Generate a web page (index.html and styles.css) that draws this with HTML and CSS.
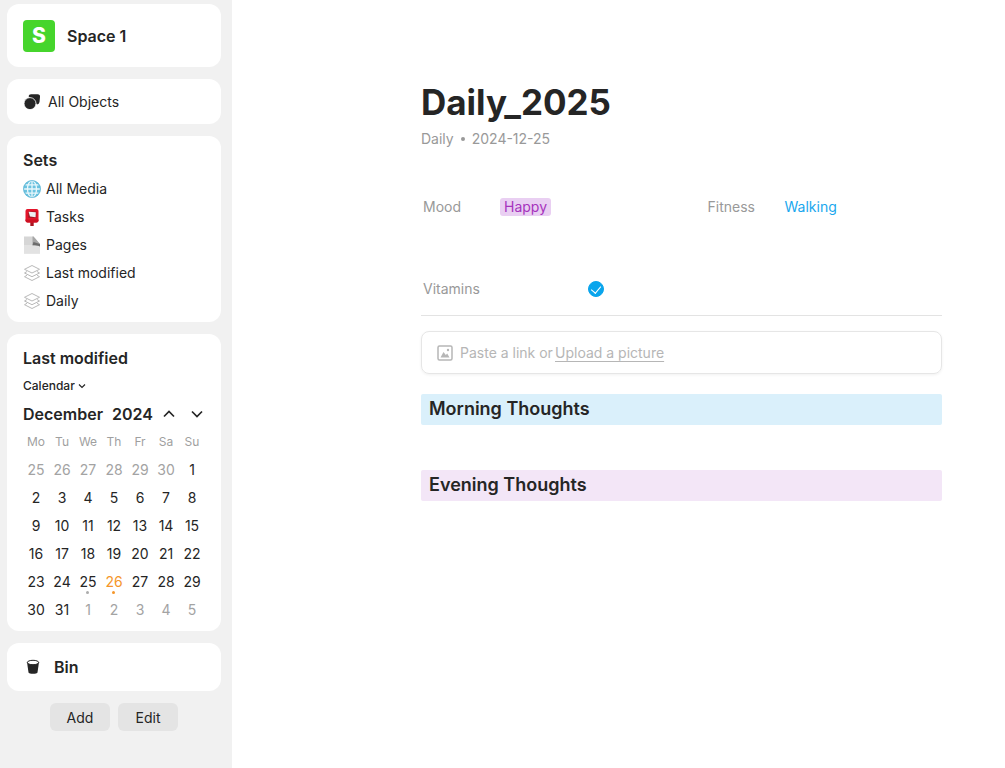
FILE: index.html
```html
<!DOCTYPE html>
<html lang="en">
<head>
    <meta charset="UTF-8">
    <meta name="viewport" content="width=device-width, initial-scale=1.0">
    <title>Daily_2025</title>
    <link rel="stylesheet" href="styles.css">
</head>
<body>

    <aside class="sidebar">
        <a href="#" class="card space">
            <span class="space-icon">S</span>
            <span class="space-name">Space 1</span>
        </a>

        <a href="#" class="card all-objects">
            <svg class="icon" viewBox="0 0 18 18" width="18" height="18">
                <path d="M8 1.200H14.500a2.500 2.500 0 0 1 2.500 2.800l-.5 5a3 3 0 0 1-2.500 2.500L10 7 5.500 3.200A2.600 2.600 0 0 1 8 1.200z" fill="#252525"/>
                <circle cx="7" cy="10.600" r="6" fill="#252525" stroke="#fff" stroke-width=".8"/>
            </svg>
            All Objects
        </a>

        <nav class="card sets">
            <h2>Sets</h2>
            <ul>
                <li><a href="#">
                    <svg class="icon" viewBox="0 0 18 18" width="18" height="18">
                        <circle cx="9" cy="9" r="8.700" fill="#6cc3e0"/>
                        <g fill="none" stroke="#eaf8fc" stroke-width="1.300">
                            <ellipse cx="9" cy="9" rx="4.500" ry="8.200"/>
                            <path d="M9 .8v16.400M.8 9h16.400M2.500 4.800h13M2.500 13.200h13"/>
                        </g>
                        <circle cx="9" cy="9" r="8.400" fill="none" stroke="#5fb6d6" stroke-width=".8"/>
                    </svg>
                    All Media</a></li>
                <li><a href="#">
                    <svg class="icon" viewBox="0 0 18 18" width="18" height="18">
                        <rect x="7.300" y="13" width="3.400" height="5" fill="#a81420"/>
                        <rect x="2.500" y="1" width="13" height="13.500" rx="2" fill="#e3142a"/>
                        <path d="M2.500 11.500h13v1a2 2 0 0 1-2 2h-9a2 2 0 0 1-2-2z" fill="#cc1022"/>
                        <path d="M5.300 3.500h8v6.300h-8z" fill="#9c1a26"/>
                        <path d="M5.600 3.800l7.200.4-.2 5L7 8.500z" fill="#eef1f2"/>
                    </svg>
                    Tasks</a></li>
                <li><a href="#">
                    <svg class="icon" viewBox="0 0 18 18" width="18" height="18">
                        <path d="M1 .5h9.500L17 8v9.500H1z" fill="#d6d6d6"/>
                        <path d="M1 9h16v8.500H1z" fill="#e2e2e2"/>
                        <path d="M9.500 .5h1L17 8v2.500C14.500 9 12 9.200 9.500 9.200z" fill="#a6a6a6"/>
                        <path d="M10.500 6L17 8v2.500C15 9.200 12.500 9.200 9.500 9.200z" fill="#6c6c6c"/>
                    </svg>
                    Pages</a></li>
                <li><a href="#">
                    <svg class="icon layers" viewBox="0 0 18 18" width="18" height="18">
                        <path d="M9 1.500l7.500 3.800L9 9 1.500 5.300z"/>
                        <path d="M4 7.500L1.500 9 9 12.700 16.500 9 14 7.500"/>
                        <path d="M4 11.300l-2.500 1.400L9 16.500l7.500-3.800-2.500-1.400"/>
                    </svg>
                    Last modified</a></li>
                <li><a href="#">
                    <svg class="icon layers" viewBox="0 0 18 18" width="18" height="18">
                        <path d="M9 1.500l7.500 3.800L9 9 1.500 5.300z"/>
                        <path d="M4 7.500L1.500 9 9 12.700 16.500 9 14 7.500"/>
                        <path d="M4 11.300l-2.500 1.400L9 16.500l7.500-3.800-2.500-1.400"/>
                    </svg>
                    Daily</a></li>
            </ul>
        </nav>

        <section class="card calendar">
            <h2>Last modified</h2>
            <div class="view-select">
                <select aria-label="View">
                    <option>Calendar</option>
                </select>
                <svg viewBox="0 0 8 8" width="8" height="8">
                    <path d="M1 2.500l3 3 3-3" fill="none" stroke="#252525" stroke-width="1.200"/>
                </svg>
            </div>
            <div class="month">
                <span class="month-name">December</span>
                <span>2024</span>
                <button type="button" class="prev" aria-label="Previous month">
                    <svg viewBox="0 0 12 12" width="12" height="12"><path d="M1 8.500l5-5 5 5"/></svg>
                </button>
                <button type="button" aria-label="Next month">
                    <svg viewBox="0 0 12 12" width="12" height="12"><path d="M1 3.500l5 5 5-5"/></svg>
                </button>
            </div>
            <table>
                <thead>
                    <tr><th>Mo</th><th>Tu</th><th>We</th><th>Th</th><th>Fr</th><th>Sa</th><th>Su</th></tr>
                </thead>
                <tbody>
                    <tr><td class="other">25</td><td class="other">26</td><td class="other">27</td><td class="other">28</td><td class="other">29</td><td class="other">30</td><td>1</td></tr>
                    <tr><td>2</td><td>3</td><td>4</td><td>5</td><td>6</td><td>7</td><td>8</td></tr>
                    <tr><td>9</td><td>10</td><td>11</td><td>12</td><td>13</td><td>14</td><td>15</td></tr>
                    <tr><td>16</td><td>17</td><td>18</td><td>19</td><td>20</td><td>21</td><td>22</td></tr>
                    <tr><td>23</td><td>24</td><td class="marked">25</td><td class="marked today">26</td><td>27</td><td>28</td><td>29</td></tr>
                    <tr><td>30</td><td>31</td><td class="other">1</td><td class="other">2</td><td class="other">3</td><td class="other">4</td><td class="other">5</td></tr>
                </tbody>
            </table>
        </section>

        <a href="#" class="card bin">
            <svg class="icon" viewBox="0 0 20 20" width="20" height="20">
                <path d="M4 5l1.500 10.500c.3 1.700 8.700 1.700 9 0L16 5z" fill="#252525"/>
                <ellipse cx="10" cy="5.500" rx="5.700" ry="2.200" fill="#fff" stroke="#252525" stroke-width="1"/>
            </svg>
            Bin
        </a>

        <div class="actions">
            <button type="button">Add</button>
            <button type="button">Edit</button>
        </div>
    </aside>

    <main class="page">
        <h1>Daily_2025</h1>
        <div class="meta">
            <span>Daily</span>
            <span class="dot"></span>
            <span>2024-12-25</span>
        </div>

        <div class="relations">
            <div class="relation">
                <span class="label">Mood</span>
                <span class="tag">Happy</span>
            </div>
            <div class="relation">
                <span class="label">Fitness</span>
                <a href="#" class="value">Walking</a>
            </div>
        </div>

        <div class="vitamins">
            <label for="vitamins">Vitamins</label>
            <input type="checkbox" id="vitamins" checked>
        </div>

        <div class="upload">
            <svg viewBox="0 0 16 16" width="16" height="16">
                <rect x="1" y="1" width="14" height="14" rx="1.500" fill="none" stroke="#b6b6b6" stroke-width="1.500"/>
                <path d="M3.500 12.500L6.500 7l2.300 3 1.400-1.500 2.300 4z" fill="#b6b6b6"/>
                <circle cx="11" cy="5" r="1.200" fill="#b6b6b6"/>
            </svg>
            <input type="text" aria-label="Picture link" placeholder="Paste a link or">
            <a href="#">Upload a picture</a>
        </div>

        <h3 class="morning">Morning Thoughts</h3>
        <h3 class="evening">Evening Thoughts</h3>
    </main>

</body>
</html>
```
FILE: styles.css
```css
* {
    box-sizing: border-box;
}
body {
    display: flex;
    min-height: 100vh;
    margin: 0;
    font-family: Inter, sans-serif;
    font-size: 14px;
    line-height: 20px;
    color: #252525;
    background-color: #fff;
}
a {
    color: inherit;
    text-decoration: none;
}
button, input, select {
    font-family: inherit;
    font-size: inherit;
    color: inherit;
}
button {
    border: none;
    cursor: pointer;
}
h1, h2, h3, ul {
    margin: 0;
    padding: 0;
}

/* Sidebar */
.sidebar {
    flex: none;
    width: 232px;
    padding: 4px 11px 12px 7px;
    display: flex;
    flex-direction: column;
    gap: 12px;
    background-color: #f1f1f1;
}
.card {
    padding: 12px 16px;
    border-radius: 12px;
    background-color: #fff;
}
.card h2 {
    font-size: 16px;
    line-height: 24px;
    font-weight: 600;
}
.icon {
    flex: none;
}
.space {
    display: flex;
    align-items: center;
    gap: 12px;
    padding: 16px 16px 15px;
}
.space-icon {
    width: 32px;
    height: 32px;
    border-radius: 4px;
    background-color: #46d52c;
    color: #fff;
    font-size: 21px;
    line-height: 32px;
    font-weight: 800;
    text-align: center;
}
.space-name {
    font-size: 16px;
    font-weight: 600;
}
.all-objects {
    display: flex;
    align-items: center;
    gap: 7px;
    padding: 13px 16px 12px;
}
.sets {
    padding-bottom: 7px;
}
.sets ul {
    margin-top: 3px;
    list-style: none;
}
.sets a {
    display: flex;
    align-items: center;
    gap: 5px;
    height: 28px;
}
.layers {
    fill: none;
    stroke: #b9b9b9;
    stroke-width: 1;
    stroke-linejoin: round;
}

/* Calendar widget */
.calendar {
    padding-bottom: 7px;
}
.view-select {
    display: flex;
    align-items: center;
    gap: 3px;
    margin-top: 6px;
}
.view-select select {
    appearance: none;
    padding: 0;
    border: none;
    background: none;
    font-size: 12px;
    line-height: 20px;
    font-weight: 500;
}
.month {
    display: flex;
    align-items: center;
    margin-top: 6px;
    font-size: 16px;
    line-height: 24px;
    font-weight: 600;
}
.month-name {
    margin-right: 9px;
}
.month button {
    display: flex;
    padding: 3px 2px;
    background: none;
}
.month .prev {
    margin: 0 12px 0 auto;
}
.month path {
    fill: none;
    stroke: #252525;
    stroke-width: 1.7;
}
.calendar table {
    width: 100%;
    margin-top: 2px;
    border-collapse: collapse;
    table-layout: fixed;
}
.calendar th, .calendar td {
    height: 28px;
    padding: 0;
    text-align: center;
}
.calendar th {
    font-size: 12px;
    font-weight: 400;
    color: #9f9f9f;
}
.calendar .other {
    color: #a3a3a3;
}
.marked {
    position: relative;
}
.marked::after {
    content: "";
    position: absolute;
    bottom: 2px;
    left: 50%;
    width: 3px;
    height: 3px;
    margin-left: -2px;
    border-radius: 50%;
    background-color: #acacac;
}
.today {
    color: #f5962a;
}
.today::after {
    background-color: #f5962a;
}

.bin {
    display: flex;
    align-items: center;
    gap: 11px;
    font-size: 16px;
    line-height: 24px;
    font-weight: 600;
}
.actions {
    display: flex;
    justify-content: center;
    gap: 8px;
}
.actions button {
    width: 60px;
    height: 28px;
    padding: 0;
    border-radius: 6px;
    background-color: #e4e4e4;
}

/* Page */
.page {
    flex: 1;
    min-width: 0;
    padding: 80px 63px 40px 189px;
}
h1 {
    font-size: 35px;
    line-height: 44px;
    font-weight: 700;
}
.meta {
    display: flex;
    align-items: center;
    gap: 7px;
    margin-top: 5px;
    color: #999;
}
.dot {
    width: 4px;
    height: 4px;
    border-radius: 50%;
    background-color: #999;
}
.relations {
    display: grid;
    grid-template-columns: 1fr 1fr;
    gap: 48px;
    margin-top: 48px;
}
.relation {
    display: flex;
    align-items: center;
    padding-left: 2px;
}
.label {
    width: 77px;
    color: #999;
}
.tag {
    padding: 0 4px;
    border-radius: 3px;
    line-height: 18px;
    color: #a633bd;
    background-color: #e9cff2;
}
.value {
    color: #1aa7ee;
}
.vitamins {
    display: flex;
    align-items: center;
    padding: 0 2px 16px;
    margin-top: 62px;
    border-bottom: 1px solid #e3e3e3;
}
.vitamins label {
    width: 165px;
    color: #999;
}
.vitamins input {
    appearance: none;
    display: flex;
    align-items: center;
    justify-content: center;
    width: 16px;
    height: 16px;
    margin: 0;
    border: 1px solid #b6b6b6;
    border-radius: 50%;
}
.vitamins input:checked {
    border-color: #0aa5ec;
    background-color: #0aa5ec;
}
.vitamins input:checked::after {
    content: "";
    width: 5px;
    height: 8px;
    margin-bottom: 2px;
    border: solid #fff;
    border-width: 0 1px 1px 0;
    transform: rotate(40deg);
}
.upload {
    display: flex;
    align-items: center;
    gap: 7px;
    height: 43px;
    padding: 0 15px;
    margin: 15px 0 20px;
    border: 1px solid #e6e6e6;
    border-radius: 8px;
    box-shadow: 0 1px 3px rgba(0, 0, 0, 0.06);
    color: #b6b6b6;
}
.upload input {
    width: 95px;
    margin-right: -7px;
    padding: 0;
    border: none;
    background: none;
}
.upload input::placeholder {
    color: #b6b6b6;
}
.upload a {
    text-decoration: underline;
    text-underline-offset: 3px;
}
h3 {
    padding: 3px 8px 4px;
    border-radius: 2px;
    font-size: 18px;
    line-height: 24px;
    font-weight: 600;
}
.morning {
    margin-bottom: 45px;
    background-color: #daf0fb;
}
.evening {
    background-color: #f3e6f7;
}
```
